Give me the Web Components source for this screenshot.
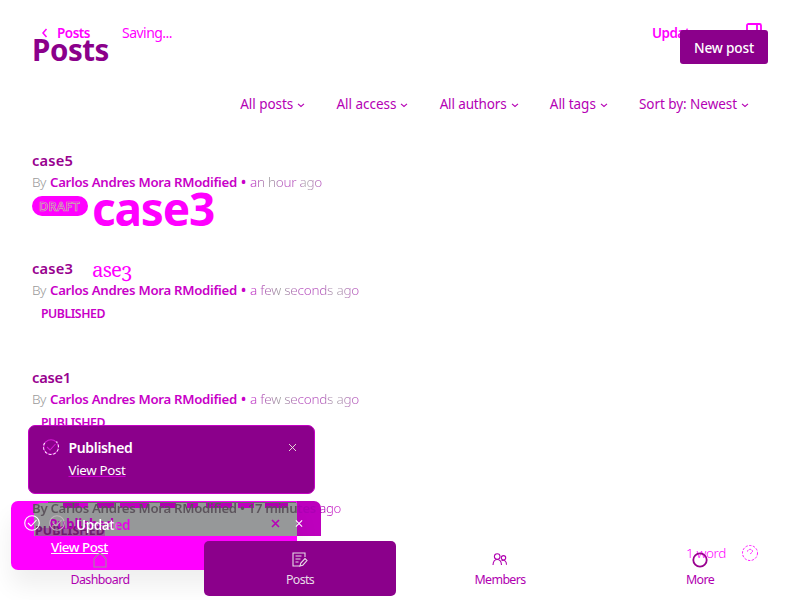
<!DOCTYPE html>
<html lang="en"><head><meta charset="utf-8"><title>Posts</title>
<style>
html,body{margin:0;width:800px;height:600px;overflow:hidden;background:#fff}
body{font-family:"Noto Sans","Open Sans",sans-serif;font-size:13.5px}
</style></head><body>
<posts-app></posts-app>
<script>
class FitText extends HTMLElement{
  connectedCallback(){
    const r=this.attachShadow({mode:'open'});
    r.innerHTML='<style>:host{display:block;white-space:nowrap;width:max-content;line-height:20px}span{display:inline-block;text-decoration:var(--line,none)}</style><span><slot></slot></span>';
    const w=+this.getAttribute('w');
    if(w){const s=r.querySelector('span'),n=this.textContent.length;
      const natural=s.getBoundingClientRect().width;
      s.style.letterSpacing=((w-natural)/n)+'px';}
  }
}
customElements.define('fit-text',FitText);

class UiIcon extends HTMLElement{
  connectedCallback(){
    const shapes={
      down:'<path d="M1 2.8 4 5.5 7 2.8"/>',
      back:'<path d="M6 1 2.5 5 6 9"/>',
      close:'<path d="m1 1 7 7M8 1 1 8"/>',
      check:'<circle cx="8" cy="8" r="7.3"/><path d="m4 8 3 3 5.5-6"/>',
      panel:'<rect x="1" y="1" width="14" height="14" rx="1.5"/><path d="M11 1v14"/>',
      home:'<path d="M1.5 7.5 5 3.5 8 1.2l3 2.3 3.5 4M2 7v8h12V7"/>',
      posts:'<path d="M13 5V1H1v13h7M3.5 4h6M3.5 7h5M3.5 10h3"/><path d="m8 14 .8-3L13 6.5l2 2-4.2 4.7z"/>',
      members:'<circle cx="5.2" cy="4.5" r="2.8"/><path d="M1 13c.2-3.5 1.7-5.5 4.2-5.5S9.3 9.5 9.5 13"/><circle cx="11.5" cy="5.8" r="2.2"/><path d="M9.5 8.7c2.8-1.4 5 .5 5 4"/>',
      more:'<circle cx="8" cy="8" r="6.7"/>',
      help:'<circle cx="8" cy="8" r="7.5" stroke-dasharray="2.4 1.4"/><path d="M5.5 6.5c.4-3 5-2.8 5 0C10.5 8 8 8 8 9.5" stroke-dasharray="2 .8"/>'
    },n=this.getAttribute('name'),v=n==='down'?8:n==='back'?8:n==='close'?9:16,h=n==='back'?10:v;
    this.attachShadow({mode:'open'}).innerHTML=`<style>:host{display:block;width:16px;height:16px;flex:none}svg{display:block;width:100%;height:100%;fill:none;stroke:currentColor;stroke-width:var(--stroke,1.1)}</style><svg viewBox="0 0 ${v} ${h}">${shapes[n]}</svg>`;
  }
}
customElements.define('ui-icon',UiIcon);

class FilterMenu extends HTMLElement{
  connectedCallback(){
    this.attachShadow({mode:'open'}).innerHTML=`<style>:host{display:flex;align-items:center;gap:4px;color:#b400b4;height:20px;font-size:13.5px;font-weight:450}ui-icon{width:8px;height:8px;margin-top:1px;--stroke:1.1}</style><fit-text w="${this.getAttribute('w')}">${this.getAttribute('label')}</fit-text><ui-icon name="down"></ui-icon>`;
  }
}
customElements.define('filter-menu',FilterMenu);

class PostRow extends HTMLElement{
  connectedCallback(){
    const a=n=>this.getAttribute(n)||'',draft=a('status')==='DRAFT';
    this.attachShadow({mode:'open'}).innerHTML=`<style>
    :host{display:block;height:108.4px;color:#c800c8}
    .title{color:#98008f;font-size:14.7px;font-weight:600;height:22px}
    .meta{display:flex;height:22px;font-weight:300}
    .by{color:#999;width:18px}.name{font-weight:600;font-size:13.2px;width:191px}.ago{background:linear-gradient(90deg,#c020c8,#999 28%,#b850c0 48%,#b050b8 66%,#aaa 78%,#b850c0);-webkit-background-clip:text;color:transparent}
    .dot{width:9px;font-weight:600}
    .tag{display:block;height:20px;width:max-content;padding:0 9px;margin-top:2px;font-size:12.3px;font-weight:600;box-sizing:border-box}
    .draft{width:56px;height:20px;border-radius:10px;background:#f0f;color:#f0f;padding:0 7px;font-weight:600;font-size:12.8px;-webkit-text-stroke:.7px #c5bba5}
    </style><fit-text class="title" w="${a('tw')}">${a('title')}</fit-text>
    <div class="meta"><fit-text class="by" w="14">By</fit-text><fit-text class="name" w="187">Carlos Andres Mora RModified</fit-text><fit-text class="dot">•</fit-text><fit-text class="ago" w="${a('aw')}">${a('ago')}</fit-text></div>
    <div class="tag ${draft?'draft':''}"><fit-text w="${draft?41:64}">${a('status')}</fit-text></div>`;
  }
}
customElements.define('post-row',PostRow);

class NavItem extends HTMLElement{
  connectedCallback(){
    this.attachShadow({mode:'open'}).innerHTML=`<style>:host{display:flex;box-sizing:border-box;flex-direction:column;align-items:center;padding-top:11px;width:192px;height:55px;border-radius:5px;color:#b000b0;font-size:12.4px;font-weight:450}
    :host([active]){background:#8b008b;color:#e8dce8;font-weight:400}fit-text{margin-top:2px}
    :host([icon=home]) ui-icon{color:#a08a9c}:host([icon=more]) ui-icon{color:#99008f;--stroke:1.8}</style><ui-icon name="${this.getAttribute('icon')}"></ui-icon><fit-text w="${this.getAttribute('w')}">${this.getAttribute('label')}</fit-text>`;
  }
}
customElements.define('nav-item',NavItem);

class ToastCard extends HTMLElement{
  connectedCallback(){
    this.attachShadow({mode:'open'}).innerHTML=`<style>:host{box-sizing:border-box;display:grid;grid-template-columns:16px 1fr 9px;column-gap:10px;padding:12px 17px 0 13.5px;align-content:start;border:1px solid #c400c4;border-radius:7px;background:#8b008b;color:#fff;width:287px;height:69px}
    ui-icon{color:#d51bd5;margin-top:1px}ui-icon[name=close]{width:9px;height:9px;color:#eed;margin-top:5px;--stroke:.9}.t{font-weight:600;font-size:14px}.v{grid-column:2;--line:underline #d000d0;font-size:13.3px;margin-top:2px}
    .c{position:relative}.c:after{content:"";position:absolute;inset:1px 0 0;height:14px;border:1px dashed #fff;border-top-color:transparent;border-radius:50%}</style>
    <div class="c"><ui-icon name="check"></ui-icon></div><fit-text class="t" w="64">Published</fit-text><ui-icon name="close"></ui-icon><fit-text class="v" w="57">View Post</fit-text>`;
  }
}
customElements.define('toast-card',ToastCard);

class ToastStack extends HTMLElement{
  connectedCallback(){
    this.attachShadow({mode:'open'}).innerHTML=`<style>
    :host,.layer,.layer>*{position:absolute}:host{left:11px;top:501px;width:331px;height:69px}
    .back{left:40px;top:0;width:270px;height:35px;background:#bd00bd;border-radius:0 7px 0 0}
    .front{left:0;top:0;width:286px;height:69px;background:#f0f;border-radius:7px 0 0 7px;box-shadow:0 16px 24px #0001}
    .grey{left:23px;top:2px;width:263px;height:33px;background:#969899;border-radius:7px 0 0}
    .edge{left:37px;top:1px;width:248px;height:6px;border-top:1px solid #666;box-sizing:border-box;background:linear-gradient(90deg,#969899 0 15px,#b000b0 15px 31px,#d000d0 31px 40px,#969899 40px 49px,#b000b0 49px 66px,#969899 66px 72px,#c000c0 72px 101px,#969899 101px 112px,#b000b0 112px 128px,#969899 128px 139px,#c000c0 139px 150px,#969899 150px 158px,#b800b8 158px 184px,#969899 184px 190px,#c000c0 190px 206px,#969899 206px 217px,#b000b0 217px 240px,#969899 240px)}
    .by{left:21px;top:-3px;background:linear-gradient(90deg,#5c545c 265px,#ac00b4 265px 299px,#c828c8 299px);-webkit-background-clip:text;color:transparent;font-weight:600;font-size:13.2px}
    .by i{font-style:normal;font-weight:350}
    .pub{left:38px;top:13px;color:#b500b5;font-weight:700}
    .pub2{left:24px;top:20px;height:15px;color:#6c206c;font-size:12.3px;font-weight:700;background:linear-gradient(#969899 0 7px,#9d609d 7px)}
    .up{left:65px;top:14px;background:linear-gradient(90deg,#fff 36px,#e800e8 42px);-webkit-background-clip:text;color:transparent;font-weight:600;z-index:1}
    .c1{left:13px;top:14px;color:#fff}.c2{left:38px;top:14px;color:#c0b6bc}
    .x1{left:260px;top:18px;width:9px;height:9px;color:#b800b8;--stroke:1.6}.x2{left:284px;top:18px;width:8px;height:9px;color:#fff;--stroke:1.2}
    .view{left:40px;top:36px;color:#fff;font-weight:500;font-size:13.3px;--line:underline}
    </style><div class="layer"><div class="back"></div><div class="front"></div><div class="grey"></div><div class="edge"></div>
    <fit-text class="by" w="309">By Carlos Andres Mora RModified • 17 minutes <i>ago</i></fit-text>
    <fit-text class="pub2" w="70">PUBLISHED</fit-text><fit-text class="pub" w="65">Published</fit-text>
    <ui-icon class="c1" name="check"></ui-icon><ui-icon class="c2" name="check"></ui-icon>
    <fit-text class="up" w="54">Updated</fit-text>
    <ui-icon class="x1" name="close"></ui-icon><ui-icon class="x2" name="close"></ui-icon><fit-text class="view" w="57">View Post</fit-text></div>`;
  }
}
customElements.define('toast-stack',ToastStack);

class EditorOverlay extends HTMLElement{
  connectedCallback(){
    this.attachShadow({mode:'open'}).innerHTML=`<style>:host{position:absolute;inset:0;color:#f0f}
    header{position:absolute;left:40px;right:38px;top:22.5px;height:20px;display:flex;align-items:center}
    header ui-icon:first-child{width:9px;height:10px;--stroke:1.5;margin-right:8px}header .p{font-weight:600}.s{margin-left:32px;font-weight:400;font-size:14px}.u{margin-left:auto;font-weight:600;margin-right:49px}.i{--stroke:1.8;margin-top:-3px}
    .title,.body,footer{position:absolute}.title{left:92px;top:178px;font-size:46px;line-height:60px;font-weight:700}.body{left:92px;top:257px;font-family:"Noto Serif","Liberation Serif",serif;font-size:20.5px;line-height:24px;font-feature-settings:"onum"}
    footer{left:686px;top:543px;display:flex;align-items:center;gap:16px;font-weight:350}footer ui-icon{--stroke:.9}</style>
    <header><ui-icon name="back"></ui-icon><fit-text class="p" w="33">Posts</fit-text><fit-text class="s" w="50">Saving...</fit-text><fit-text class="u" w="45">Update</fit-text><ui-icon class="i" name="panel"></ui-icon></header>
    <fit-text class="title" w="122">case3</fit-text><fit-text class="body" w="40">ase3</fit-text><footer><fit-text w="40">1 word</fit-text><ui-icon name="help"></ui-icon></footer>`;
  }
}
customElements.define('editor-overlay',EditorOverlay);

class PostsApp extends HTMLElement{
  connectedCallback(){
    this.attachShadow({mode:'open'}).innerHTML=`<style>
    :host{display:block;position:relative;width:800px;height:600px;overflow:hidden}
    .head{display:flex;justify-content:space-between;padding:30px 32px 0;height:34px;position:relative;z-index:2}.head>fit-text{font-size:29.5px;line-height:40px;font-weight:700;color:#8b008b}
    button{width:88px;height:34px;margin:0;padding:0;border:0;border-radius:3px;background:#8b008b;color:#fff;font:500 13.7px "Noto Sans",sans-serif;display:flex;align-items:center;justify-content:center}
    button fit-text{margin-top:2px}
    .filters{display:flex;gap:31.2px;justify-content:flex-end;padding:30px 51px 0 0}.list{padding:36px 32px 0;height:449px;box-sizing:border-box;overflow:hidden}
    nav{position:absolute;left:4px;top:541px;display:flex;gap:8px;z-index:3}.toast{position:absolute;left:28px;top:425px;z-index:4}
    </style><editor-overlay></editor-overlay><div class="head"><fit-text w="77">Posts</fit-text><button><fit-text w="60">New post</fit-text></button></div>
    <div class="filters"><filter-menu label="All posts" w="53"></filter-menu><filter-menu label="All access" w="60"></filter-menu><filter-menu label="All authors" w="67"></filter-menu><filter-menu label="All tags" w="46"></filter-menu><filter-menu label="Sort by: Newest" w="98"></filter-menu></div>
    <main class="list"><post-row title="case5" tw="41" ago="an hour ago" aw="72" status="DRAFT"></post-row><post-row title="case3" tw="41" ago="a few seconds ago" aw="109" status="PUBLISHED"></post-row><post-row title="case1" tw="39" ago="a few seconds ago" aw="109" status="PUBLISHED"></post-row></main>
    <toast-stack></toast-stack><toast-card class="toast"></toast-card>
    <nav><nav-item icon="home" label="Dashboard" w="59"></nav-item><nav-item active icon="posts" label="Posts" w="28"></nav-item><nav-item icon="members" label="Members" w="51"></nav-item><nav-item icon="more" label="More" w="28"></nav-item></nav>`;
  }
}
customElements.define('posts-app',PostsApp);
</script></body></html>
